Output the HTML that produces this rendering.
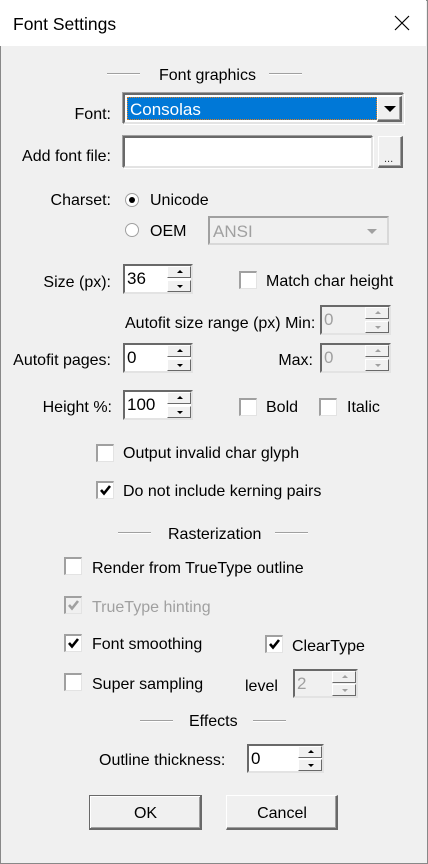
<!DOCTYPE html>
<html><head><meta charset="utf-8"><style>
*{box-sizing:border-box;margin:0;padding:0}
body{width:428px;height:864px;background:#f0f0f0;font-family:"Liberation Sans",sans-serif;font-size:16px;color:#000;position:relative;overflow:hidden}
.win{position:absolute;left:0;top:0;width:428px;height:864px;border:1px solid #888;}
.title{position:absolute;left:0;top:0;width:426px;height:46px;background:#fff}
.a{position:absolute;white-space:nowrap;line-height:18px;margin-top:2px}
.r{text-align:right}
.sunk{position:absolute;background:#fff;border-top:2px solid #696969;border-left:2px solid #696969;border-right:2px solid #e3e3e3;border-bottom:2px solid #e3e3e3;box-shadow:-1px -1px 0 #a0a0a0,1px 1px 0 #fff}
.btn{position:absolute;background:#f0f0f0;border-top:1px solid #fff;border-left:1px solid #fff;border-right:2px solid #696969;border-bottom:2px solid #696969;box-shadow:inset -1px -1px 0 #a0a0a0}
.cb{position:absolute;width:18px;height:18px;background:#fff;border-top:2px solid #a0a0a0;border-left:2px solid #a0a0a0;border-right:1px solid #e3e3e3;border-bottom:1px solid #e3e3e3}
.cb svg{position:absolute;left:1px;top:1px}
.line{position:absolute;background:#a0a0a0;border-bottom:1px solid #fff;height:2px}
.spin{position:absolute;border-top:2px solid #696969;border-left:2px solid #696969;border-right:2px solid #e3e3e3;border-bottom:2px solid #e3e3e3;background:#fff}
.spin .v{position:absolute;left:2px;top:4px;font-size:17px;line-height:18px}
.spin .b1,.spin .b2{position:absolute;right:0;width:24px;height:12px;background:#f0f0f0;border-top:1px solid #fff;border-left:1px solid #fff;border-right:1px solid #696969;border-bottom:1px solid #696969}
.spin .b1{top:0}.spin .b2{bottom:0}
.spin .b1:after,.spin .b2:after{content:"";position:absolute;left:9px;border-left:3px solid transparent;border-right:3px solid transparent}
.spin .b1:after{top:3px;border-bottom:3px solid #000}
.spin .b2:after{top:4px;border-top:3px solid #000}
.dis{background:#f0f0f0}
.dis .v{color:#a0a0a0}
.dis .b1:after{border-bottom-color:#a0a0a0}
.dis .b2:after{border-top-color:#a0a0a0}
.radio{position:absolute;width:14px;height:14px;border-radius:50%;background:#fff;border:1px solid #a0a0a0}
</style></head><body>
<div class="win"></div>
<div class="title"></div>
<div class="a" style="left:13px;top:13px;font-size:17.5px">Font Settings</div>
<svg style="position:absolute;left:394px;top:15px" width="16" height="16"><path d="M1 1L15 15M15 1L1 15" stroke="#000" stroke-width="1.2"/></svg>

<div class="line" style="left:107px;top:73px;width:33px"></div>
<div class="a" style="left:159px;top:65px">Font graphics</div>
<div class="line" style="left:269px;top:73px;width:33px"></div>

<div class="a r" style="left:0;width:111px;top:104px">Font:</div>
<div class="sunk" style="left:123px;top:93px;width:281px;height:31px"></div>
<div style="position:absolute;left:127px;top:97px;width:250px;height:23px;background:#0078d7;outline:1px dotted #e08020;outline-offset:-1px"></div>
<div class="a" style="left:130px;top:99px;color:#fff;font-size:17px">Consolas</div>
<div class="btn" style="left:377px;top:96px;width:25px;height:26px"></div>
<div style="position:absolute;left:384px;top:106px;border-left:6px solid transparent;border-right:6px solid transparent;border-top:6px solid #000"></div>

<div class="a r" style="left:0;width:111px;top:146px">Add font file:</div>
<div class="sunk" style="left:123px;top:136px;width:250px;height:32px"></div>
<div class="btn" style="left:378px;top:136px;width:25px;height:32px"></div>
<div class="a" style="left:384px;top:148px;font-size:11px;color:#333">...</div>

<div class="a r" style="left:0;width:111px;top:190px">Charset:</div>
<div class="radio" style="left:125px;top:193px"></div>
<div style="position:absolute;left:129px;top:197px;width:6px;height:6px;background:#000;border-radius:50%"></div>
<div class="a" style="left:150px;top:190px">Unicode</div>
<div class="radio" style="left:125px;top:223px"></div>
<div class="a" style="left:150px;top:221px">OEM</div>
<div style="position:absolute;left:208px;top:216px;width:181px;height:29px;border-top:2px solid #a0a0a0;border-left:2px solid #a0a0a0;border-right:2px solid #d8d8d8;border-bottom:2px solid #d8d8d8;background:#f0f0f0"></div>
<div class="a" style="left:213px;top:221px;color:#a0a0a0;font-size:17px">ANSI</div>
<div style="position:absolute;left:367px;top:229px;border-left:5px solid transparent;border-right:5px solid transparent;border-top:5px solid #a0a0a0"></div>

<div class="a r" style="left:0;width:111px;top:272px">Size (px):</div>
<div class="spin" style="left:123px;top:264px;width:70px;height:30px"><div class="v">36</div><div class="b1"></div><div class="b2"></div></div>
<div class="cb" style="left:239px;top:271px"></div>
<div class="a" style="left:266px;top:271px">Match char height</div>

<div class="a" style="left:125px;top:313px">Autofit size range (px) Min:</div>
<div class="spin dis" style="left:320px;top:305px;width:71px;height:30px"><div class="v">0</div><div class="b1"></div><div class="b2"></div></div>

<div class="a r" style="left:0;width:111px;top:350px">Autofit pages:</div>
<div class="spin" style="left:123px;top:343px;width:70px;height:30px"><div class="v">0</div><div class="b1"></div><div class="b2"></div></div>
<div class="a r" style="left:200px;width:113px;top:350px">Max:</div>
<div class="spin dis" style="left:320px;top:343px;width:71px;height:30px"><div class="v">0</div><div class="b1"></div><div class="b2"></div></div>

<div class="a r" style="left:0;width:112px;top:397px">Height %:</div>
<div class="spin" style="left:123px;top:390px;width:70px;height:30px"><div class="v">100</div><div class="b1"></div><div class="b2"></div></div>
<div class="cb" style="left:239px;top:398px"></div>
<div class="a" style="left:266px;top:397px">Bold</div>
<div class="cb" style="left:319px;top:398px"></div>
<div class="a" style="left:347px;top:397px">Italic</div>

<div class="cb" style="left:96px;top:444px"></div>
<div class="a" style="left:123px;top:443px">Output invalid char glyph</div>
<div class="cb" style="left:96px;top:481px"><svg width="13" height="13"><path d="M2 6L5 9.5L11 2" stroke="#000" stroke-width="2.6" fill="none"/></svg></div>
<div class="a" style="left:123px;top:481px">Do not include kerning pairs</div>

<div class="line" style="left:118px;top:532px;width:33px"></div>
<div class="a" style="left:168px;top:524px">Rasterization</div>
<div class="line" style="left:275px;top:532px;width:33px"></div>

<div class="cb" style="left:64px;top:557px"></div>
<div class="a" style="left:92px;top:558px">Render from TrueType outline</div>
<div class="cb" style="left:64px;top:596px;background:#f0f0f0"><svg width="13" height="13"><path d="M2 6L5 9.5L11 2" stroke="#a0a0a0" stroke-width="2.6" fill="none"/></svg></div>
<div class="a" style="left:92px;top:597px;color:#a0a0a0">TrueType hinting</div>
<div class="cb" style="left:64px;top:634px"><svg width="13" height="13"><path d="M2 6L5 9.5L11 2" stroke="#000" stroke-width="2.6" fill="none"/></svg></div>
<div class="a" style="left:92px;top:634px">Font smoothing</div>
<div class="cb" style="left:265px;top:635px"><svg width="13" height="13"><path d="M2 6L5 9.5L11 2" stroke="#000" stroke-width="2.6" fill="none"/></svg></div>
<div class="a" style="left:292px;top:636px">ClearType</div>
<div class="cb" style="left:64px;top:673px"></div>
<div class="a" style="left:92px;top:674px">Super sampling</div>
<div class="a" style="left:245px;top:676px">level</div>
<div class="spin dis" style="left:293px;top:669px;width:65px;height:29px"><div class="v">2</div><div class="b1"></div><div class="b2"></div></div>

<div class="line" style="left:140px;top:720px;width:33px"></div>
<div class="a" style="left:189px;top:711px">Effects</div>
<div class="line" style="left:253px;top:720px;width:33px"></div>

<div class="a" style="left:99px;top:750px">Outline thickness:</div>
<div class="spin" style="left:247px;top:744px;width:77px;height:29px"><div class="v">0</div><div class="b1"></div><div class="b2"></div></div>

<div class="btn" style="left:89px;top:795px;width:113px;height:35px;border-top:1px solid #696969;border-left:1px solid #696969;box-shadow:inset 1px 1px 0 #fff,inset -1px -1px 0 #a0a0a0"></div>
<div class="a" style="left:89px;width:113px;top:803px;text-align:center">OK</div>
<div class="btn" style="left:226px;top:795px;width:112px;height:35px"></div>
<div class="a" style="left:226px;width:112px;top:803px;text-align:center">Cancel</div>
</body></html>
